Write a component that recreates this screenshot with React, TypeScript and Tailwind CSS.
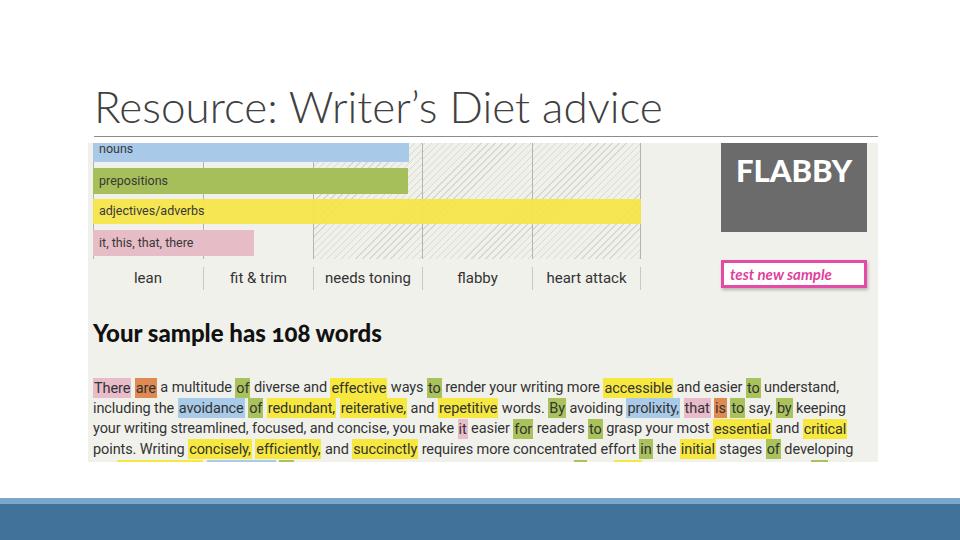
type Seg = string | [string, "p" | "o" | "g" | "y" | "b"];

const marks = {
  p: "bg-[#e8bccb]",
  o: "bg-[#de8a52]",
  g: "bg-[#a9c25c]",
  y: "bg-[#f6e83f]",
  b: "bg-[#a9cbe9]",
};

const lines: Seg[][] = [
  [["There", "p"], " ", ["are", "o"], " a multitude ", ["of", "g"], " diverse and ", ["effective", "y"], " ways ", ["to", "g"], " render your writing more ", ["accessible", "y"], " and easier ", ["to", "g"], " understand,"],
  ["including the ", ["avoidance", "b"], " ", ["of", "g"], " ", ["redundant,", "y"], " ", ["reiterative,", "y"], " and ", ["repetitive", "y"], " words. ", ["By", "g"], " avoiding ", ["prolixity,", "b"], " ", ["that", "p"], " ", ["is", "o"], " ", ["to", "g"], " say, ", ["by", "g"], " keeping"],
  ["your writing streamlined, focused, and concise, you make ", ["it", "p"], " easier ", ["for", "g"], " readers ", ["to", "g"], " grasp your most ", ["essential", "y"], " and ", ["critical", "y"]],
  ["points. Writing ", ["concisely,", "y"], " ", ["efficiently,", "y"], " and ", ["succinctly", "y"], " requires more concentrated effort ", ["in", "g"], " the ", ["initial", "y"], " stages ", ["of", "g"], " developing"],
  ["the ", ["finished, final", "y"], " ", ["document,", "b"], " ", ["of", "g"], " course, but this investment pays off greatly ", ["in", "g"], " the ", ["end,", "y"], " since readers value prose ", ["as", "g"], " much as writers do."],
];

const bars = [
  { label: "nouns", cls: "row-start-1 w-[316px] h-[25px] bg-[#a8c9e8]" },
  { label: "prepositions", cls: "row-start-2 w-[315px] h-[26px] bg-[#a6bf5b]" },
  { label: "adjectives/adverbs", cls: "row-start-3 w-[548px] h-[25px] bg-[#f5e54a]/95" },
  { label: "it, this, that, there", cls: "row-start-4 w-[161px] h-[26px] bg-[#e6bcc6]" },
];

const hatch =
  "bg-[image:repeating-linear-gradient(135deg,#d8d8d2_0px,#d8d8d2_1px,transparent_1px,transparent_5px)]";

const columns = [
  "col-start-1 border-l",
  "col-start-2 border-l",
  `col-start-3 border-l ${hatch}`,
  `col-start-4 border-l ${hatch}`,
  `col-start-5 border-l border-r ${hatch}`,
];

const levels = ["lean", "fit & trim", "needs toning", "flabby", "heart attack"];

function Chart() {
  return (
    <div className="w-[548px]">
      <div className="-mt-[6px] grid grid-cols-[110px_110px_109px_110px_109px] grid-rows-[31px_31px_31px_29px]">
        {columns.map((c) => (
          <div key={c} className={`row-start-1 row-end-5 border-[#b4b4ae] ${c}`} />
        ))}
        {bars.map((bar) => (
          <div
            key={bar.label}
            className={`col-start-1 col-end-6 flex items-center self-start pl-[6px] text-[12.5px] text-[#383838] ${bar.cls}`}
          >
            {bar.label}
          </div>
        ))}
      </div>
      <div className="mt-[8px] grid h-[20px] grid-cols-[110px_110px_109px_110px_109px]">
        {levels.map((l, i) => (
          <div
            key={l}
            className={
              i === 0
                ? "flex items-center justify-center text-[15px] text-[#333]"
                : i === 4
                  ? "flex items-center justify-center border-x border-[#c9c9c4] text-[15px] text-[#333]"
                  : "flex items-center justify-center border-l border-[#c9c9c4] text-[15px] text-[#333]"
            }
          >
            {l}
          </div>
        ))}
      </div>
    </div>
  );
}

function Sample() {
  return (
    <div className="mt-[6px] ml-[88px] flex h-[319px] w-[790px] flex-col overflow-hidden bg-[#f1f1ec] pl-[5px] font-[Roboto,sans-serif]">
      <div className="flex gap-[80px]">
        <Chart />
        <div className="flex w-[146px] flex-col">
          <div className="h-[89px] bg-[#6b6b6b] pl-[15px] pt-[9px] font-[Lato,sans-serif] text-[31px] font-black leading-[36px] text-white">
            FLABBY
          </div>
          <div className="mt-[28px] flex h-[28px] items-center border-[3px] border-[#e54aa6] bg-white pl-[6px] font-[Lato,sans-serif] text-[15px] font-bold italic text-[#df3f9b] shadow-[1px_2px_3px_rgba(0,0,0,0.25)]">
            test new sample
          </div>
        </div>
      </div>
      <div className="mt-[21px] h-px w-[774px] bg-[#3c3c3c]" />
      <h2 className="mt-[10px] font-[Lato,sans-serif] text-[24px] font-black leading-[28px] text-[#111] oldstyle-nums">
        Your sample has 108 words
      </h2>
      <div className="mt-[31px] text-[14.5px] leading-[20.5px] tracking-[-0.1px] text-[#333]">
        {lines.map((line, i) => (
          <div key={i} className="whitespace-pre">
            {line.map((s, j) =>
              typeof s === "string" ? (
                <span key={j}>{s}</span>
              ) : (
                <span key={j} className={`${marks[s[1]]} px-[1px] py-[1.5px]`}>
                  {s[0]}
                </span>
              ),
            )}
          </div>
        ))}
      </div>
    </div>
  );
}

export default function App() {
  return (
    <div className="flex h-[540px] w-[960px] flex-col bg-white">
      <h1 className="ml-[94px] pt-[80px] font-[Lato,sans-serif] text-[44px] font-light leading-[52px] text-[#404040]">
        Resource: Writer’s Diet advice
      </h1>
      <div className="mt-[4px] ml-[94px] h-px w-[784px] bg-[#8c8c8c]" />
      <Sample />
      <div className="flex-1" />
      <div className="h-[6px] bg-[#7ba7cc]" />
      <div className="h-[36px] bg-[#41739a]" />
    </div>
  );
}
